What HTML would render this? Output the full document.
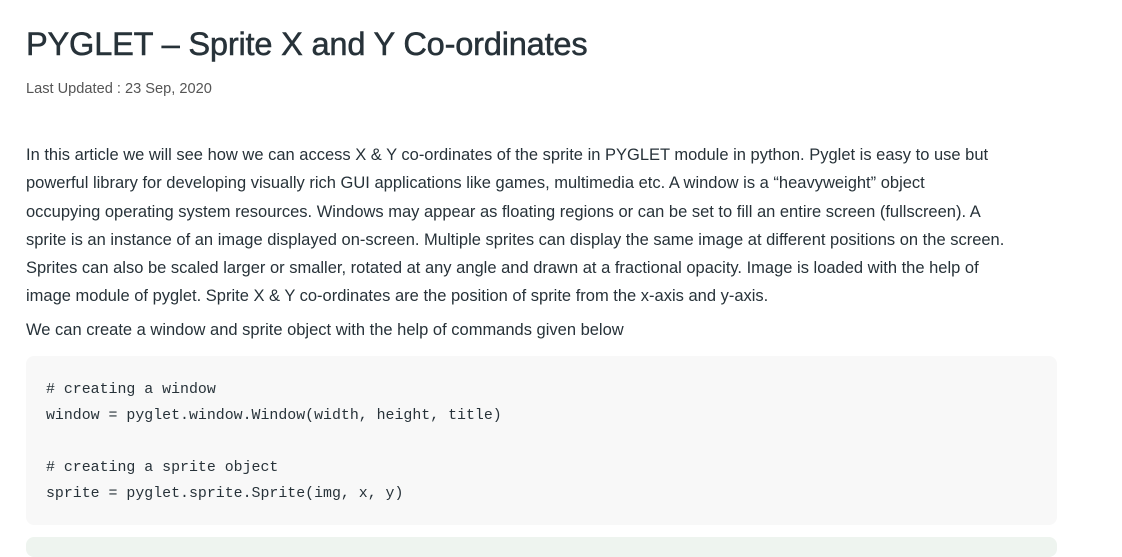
<!DOCTYPE html>
<html><head><style>
body{margin:0;background:#fff;color:#273239;font-family:"Liberation Sans",sans-serif;width:1122px;height:542px;overflow:hidden;position:relative}
h1{position:absolute;left:26px;top:25px;margin:0;font-size:32.6px;font-weight:normal;color:#273239;white-space:nowrap;letter-spacing:-0.2px;-webkit-text-stroke:0.5px #273239}
.d{position:absolute;left:26px;top:81px;font-size:14.6px;color:#555}
.p{position:absolute;left:26px;top:141px;font-size:16.5px;line-height:28.3px;white-space:nowrap;color:#273239}
.q{position:absolute;left:26px;top:321px;font-size:16.5px;white-space:nowrap}
.code{position:absolute;left:26px;top:356px;width:1031px;height:169px;background:#f8f8f8;border-radius:8px}
.code pre{margin:0;position:absolute;left:20px;top:21px;font-family:"Liberation Mono",monospace;font-size:14.9px;line-height:26px;color:#273239}
.g{position:absolute;left:26px;top:537px;width:1031px;height:20px;background:#eef4ef;border-radius:8px}
</style></head><body>
<h1>PYGLET – Sprite X and Y Co-ordinates</h1>
<div class="d">Last Updated : 23 Sep, 2020</div>
<div class="p">In this article we will see how we can access X &amp; Y co-ordinates of the sprite in PYGLET module in python. Pyglet is easy to use but<br>powerful library for developing visually rich GUI applications like games, multimedia etc. A window is a “heavyweight” object<br>occupying operating system resources. Windows may appear as floating regions or can be set to fill an entire screen (fullscreen). A<br>sprite is an instance of an image displayed on-screen. Multiple sprites can display the same image at different positions on the screen.<br>Sprites can also be scaled larger or smaller, rotated at any angle and drawn at a fractional opacity. Image is loaded with the help of<br>image module of pyglet. Sprite X &amp; Y co-ordinates are the position of sprite from the x-axis and y-axis.</div>
<div class="q">We can create a window and sprite object with the help of commands given below</div>
<div class="code"><pre># creating a window
window = pyglet.window.Window(width, height, title)

# creating a sprite object
sprite = pyglet.sprite.Sprite(img, x, y)</pre></div>
<div class="g"></div>
</body></html>
